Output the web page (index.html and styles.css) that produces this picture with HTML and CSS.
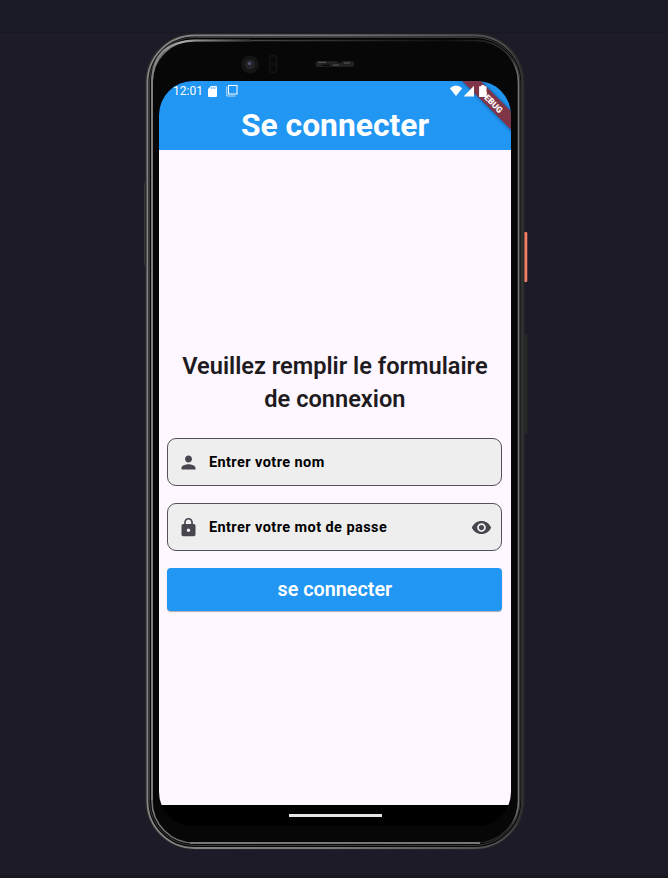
FILE: index.html
```html
<!DOCTYPE html>
<html lang="fr">
<head>
<meta charset="utf-8">
<title>Se connecter</title>
<link rel="stylesheet" href="styles.css">
</head>
<body>
<div class="phone">
  <svg class="shell" viewBox="144 33 384 818" aria-hidden="true">
    <defs>
      <linearGradient id="rim" x1="0" y1="0" x2="1" y2="0">
        <stop offset="0" stop-color="#858585"/><stop offset=".5" stop-color="#777"/><stop offset=".96" stop-color="#4b4b4b"/><stop offset="1" stop-color="#303232"/>
      </linearGradient>
      <linearGradient id="glint" x1="0" y1="0" x2="1" y2="0">
        <stop offset="0" stop-color="#777"/><stop offset=".3" stop-color="#444"/><stop offset=".8" stop-color="#111"/><stop offset=".98" stop-color="#333"/><stop offset="1" stop-color="#777"/>
      </linearGradient>
      <linearGradient id="corner" x1="0" y1="0" x2="1" y2="0">
        <stop offset="0" stop-color="#808080"/><stop offset=".3" stop-color="#aaa"/><stop offset="1" stop-color="#333"/>
      </linearGradient>
    </defs>
    <rect x="144.5" y="183" width="2" height="82" fill="#505155"/>
    <rect x="523" y="232" width="4.3" height="50" rx="1.2" fill="#f47c65"/>
    <rect x="523" y="334" width="4.5" height="100" rx="1" fill="#252827"/>
    <rect x="145" y="33.5" width="379.5" height="816" rx="49" fill="#292b2b"/>
    <rect x="147.5" y="35.5" width="374.5" height="812.5" rx="47" fill="#050505" stroke="url(#rim)" stroke-width="1.8"/>
    <rect x="149.5" y="37.5" width="370.5" height="808" rx="45" fill="none" stroke="#39393c" stroke-width="1"/>
    <rect x="152" y="40.5" width="366.5" height="802.5" rx="42" fill="#080708" stroke="url(#glint)" stroke-width="1.6"/>
    <path d="M190 843H480" stroke="#777975" stroke-width="2"/>
    <path d="M152 800V83Q152 42 195 40.5H250" fill="none" stroke="url(#corner)" stroke-width="1.9"/>
    <circle cx="250" cy="64.5" r="9" fill="#151515"/><circle cx="250" cy="64.5" r="5" fill="#24252b"/><circle cx="249.5" cy="63.5" r="1.7" fill="#4c506c"/>
    <rect x="269" y="55" width="8" height="18" rx="4" fill="#0e0e0e" stroke="#151515"/>
    <circle cx="273" cy="59.5" r="2.5" fill="#090909"/><circle cx="273" cy="69" r="2.5" fill="#090909"/>
    <rect x="315.5" y="61" width="39" height="6" rx="3" fill="#222"/>
    <path d="M318 62.3h8M333 65h6M344 63h6" stroke="#5d5d5d" stroke-width="1"/>
    <path d="M322 65.5h8M337 62h5" stroke="#080808" stroke-width="1.5"/>
  </svg>

  <main class="screen">
    <header class="app-bar">
      <div class="status">
        <span class="clock">12:01</span>
        <svg class="sd" viewBox="0 0 9 11"><path d="M3 0h5q1 0 1 1v9q0 1-1 1H1q-1 0-1-1V3z" fill="#fff"/><path d="M3.4 1v2M5.2 1v2M7 1v2" stroke="#2196f3" stroke-width=".7"/></svg>
        <svg class="windows" viewBox="0 0 12 12" fill="none" stroke="#fff"><rect x="2.500" y=".5" width="8.5" height="8.5"/><path d="M.8 1.500v9.500H9.500" opacity=".7"/></svg>
        <svg class="signals" viewBox="0 0 40 12" fill="#fff"><path d="M.8 3.2Q7-2 13.200 3.200L7 11z"/><path d="M25 .8V11.500H14.500z"/><path d="M32.300 0h3v1.300h2.200V12h-7.400V1.300h2.200z"/></svg>
      </div>
      <h1>Se connecter</h1>
    </header>
    <form class="login">
      <h2>Veuillez remplir le formulaire<br>de connexion</h2>
      <div class="field">
        <svg class="icon" viewBox="0 0 24 24"><path d="M12 12c2.21 0 4-1.79 4-4s-1.79-4-4-4-4 1.79-4 4 1.79 4 4 4zm0 2c-2.67 0-8 1.34-8 4v2h16v-2c0-2.66-5.33-4-8-4z"/></svg>
        <span>Entrer votre nom</span>
      </div>
      <div class="field">
        <svg class="icon" viewBox="0 0 24 24"><path d="M18 8h-1V6c0-2.76-2.24-5-5-5S7 3.24 7 6v2H6c-1.1 0-2 .9-2 2v10c0 1.1.9 2 2 2h12c1.1 0 2-.9 2-2V10c0-1.1-.9-2-2-2zm-6 9c-1.1 0-2-.9-2-2s.9-2 2-2 2 .9 2 2-.9 2-2 2zm3.1-9H8.9V6c0-1.71 1.39-3.1 3.1-3.1s3.1 1.39 3.1 3.1z"/></svg>
        <span>Entrer votre mot de passe</span>
        <svg class="icon eye" viewBox="0 0 24 24"><path d="M12 4.5C7 4.5 2.73 7.61 1 12c1.73 4.39 6 7.5 11 7.5s9.27-3.11 11-7.5c-1.73-4.39-6-7.5-11-7.5zM12 17c-2.76 0-5-2.24-5-5s2.24-5 5-5 5 2.24 5 5-2.24 5-5 5zm0-8c-1.66 0-3 1.34-3 3s1.34 3 3 3 3-1.34 3-3-1.34-3-3-3z"/></svg>
      </div>
      <button type="button">se connecter</button>
    </form>
    <footer class="nav"><i></i></footer>
    <div class="ribbon">DEBUG</div>
  </main>
</div>
</body>
</html>
```

FILE: styles.css
```css
* { box-sizing: border-box; }
body {
  margin: 0;
  height: 878px;
  padding: 33px 0 0 144px;
  overflow: hidden;
  background: linear-gradient(#1b1b26 32px, #181821 32px, #181821 33px, #1c1b27 33px, #1c1b27 875px, #171720 875px);
  font-family: Roboto, "Liberation Sans", sans-serif;
}
.phone {
  position: relative;
  width: 384px;
  height: 818px;
  padding: 48px 17px 24px 15px;
}
.shell { position: absolute; inset: 0; width: 384px; height: 818px; }
.screen {
  position: relative;
  display: flex;
  flex-direction: column;
  width: 352px;
  height: 745px;
  overflow: hidden;
  border-radius: 34px;
  background: #000;
}
.app-bar { height: 69px; background: #2196f3; color: #fff; }
.status {
  position: relative;
  z-index: 2;
  display: flex;
  align-items: center;
  height: 20px;
  padding: 0 22px 0 14px;
}
.clock { width: 35px; font-size: 12px; line-height: 20px; }
.sd { width: 9px; height: 11px; }
.windows { width: 12px; height: 12px; margin-left: 9px; }
.signals { width: 40px; height: 12px; margin-left: auto; }
h1 {
  margin: 5px 0 0;
  font-size: 31.8px;
  line-height: 38px;
  font-weight: 700;
  text-align: center;
}
.login { flex: 1; padding: 200px 8.6px 0 8.4px; background: #fef7ff; }
h2 {
  margin: 0 0 22px;
  color: #1d1b20;
  font-size: 23.6px;
  line-height: 33px;
  font-weight: 600;
  text-align: center;
  white-space: nowrap;
}
.field {
  display: flex;
  align-items: center;
  height: 48px;
  margin-bottom: 17px;
  padding: 0 9.5px;
  border: 1px solid #55515a;
  border-radius: 9px;
  background: #eee;
  color: #000;
  font-size: 14.5px;
  font-weight: 700;
  letter-spacing: .43px;
}
.field span { margin-left: 10px; }
.icon { width: 21px; height: 21px; fill: #49454f; }
.eye { margin-left: auto; }
button {
  display: block;
  width: 100%;
  height: 43px;
  padding: 0;
  border: 0;
  border-radius: 4px;
  background: #2196f3;
  box-shadow: 0 1px 1px #7779;
  color: #fff;
  font: 600 19.8px/44px Roboto, sans-serif;
}
.nav { display: flex; justify-content: center; height: 21px; padding-top: 9px; background: #000; }
.nav i { width: 93px; height: 3px; background: #e5e5e5; }
.ribbon {
  position: absolute;
  top: 14px;
  right: -31px;
  width: 100px;
  height: 13px;
  transform: rotate(45deg);
  background: #803448;
  box-shadow: 0 0 4px #0007;
  color: #fff;
  font-size: 8.5px;
  line-height: 14px;
  font-weight: 900;
  text-align: center;
}
```
